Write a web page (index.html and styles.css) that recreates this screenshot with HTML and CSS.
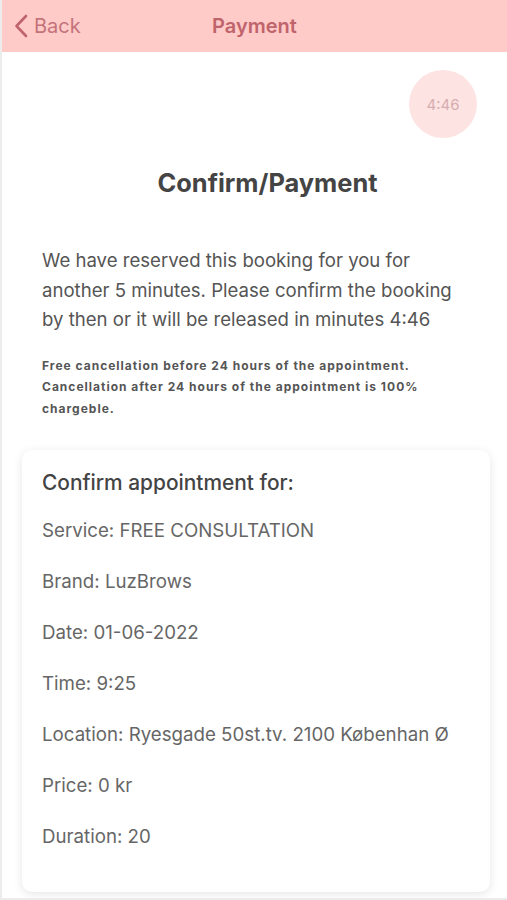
FILE: index.html
```html
<!DOCTYPE html>
<html lang="en">
<head>
    <meta charset="UTF-8">
    <meta name="viewport" content="width=device-width, initial-scale=1.0">
    <title>Payment</title>
    <link rel="stylesheet" href="styles.css">
</head>
<body>
    <div class="app">
        <header class="topbar">
            <a class="back" href="#">
                <svg width="14" height="24" viewBox="0 0 14 24" fill="none">
                    <path d="M12 2 L2.5 12 L12 22" stroke="#c0646c" stroke-width="2.6" stroke-linecap="round" stroke-linejoin="round"/>
                </svg>
                <span>Back</span>
            </a>
            <div class="topbar-title">Payment</div>
            <div></div>
        </header>

        <main class="content">
            <div class="timer-row">
                <div class="timer">4:46</div>
            </div>

            <h1>Confirm/Payment</h1>

            <p class="notice">We have reserved this booking for you for another 5 minutes. Please confirm the booking by then or it will be released in minutes 4:46</p>

            <p class="terms">Free cancellation before 24 hours of the appointment. Cancellation after 24 hours of the appointment is 100% chargeble.</p>

            <!-- Booking summary -->
            <div class="card">
                <h2>Confirm appointment for:</h2>
                <ul class="details">
                    <li>Service: FREE CONSULTATION</li>
                    <li>Brand: LuzBrows</li>
                    <li>Date: 01-06-2022</li>
                    <li>Time: 9:25</li>
                    <li>Location: Ryesgade 50st.tv. 2100 Københan Ø</li>
                    <li>Price: 0 kr</li>
                    <li>Duration: 20</li>
                </ul>
            </div>
        </main>
    </div>
</body>
</html>
```

FILE: styles.css
```css
body {
    font-family: Inter, "Noto Sans", sans-serif;
    background-color: #ececec;
    margin: 0;
    padding: 0;
}
.app {
    margin-left: 2px;
    height: 898px;
    background: #fff;
    overflow: hidden;
}
.topbar {
    height: 52px;
    background-color: #ffcbc9;
    display: grid;
    grid-template-columns: 1fr auto 1fr;
    align-items: center;
    padding: 0 12px;
}
.back {
    display: flex;
    align-items: center;
    gap: 6px;
    color: #c4737a;
    text-decoration: none;
    font-size: 20px;
}
.topbar-title {
    color: #c0646c;
    font-size: 20px;
    font-weight: 600;
}
.timer-row {
    display: flex;
    justify-content: flex-end;
    padding: 18px 30px 0 0;
}
.timer {
    width: 68px;
    height: 68px;
    border-radius: 50%;
    background: #fde3e2;
    color: #d6adb0;
    font-size: 15px;
    display: flex;
    align-items: center;
    justify-content: center;
}
h1 {
    text-align: center;
    color: #444;
    font-size: 25.4px;
    font-weight: 700;
    margin: 29px 0 0 26px;
}
.notice {
    margin: 48px 40px 0;
    color: #555;
    font-size: 18.6px;
    line-height: 29.5px;
}
.terms {
    margin: 20px 40px 0;
    color: #555;
    font-size: 12px;
    font-weight: 700;
    letter-spacing: 1px;
    line-height: 21.5px;
}
.card {
    margin: 31px 17px 0 20px;
    height: 442px;
    box-sizing: border-box;
    background: #fff;
    border-radius: 10px;
    box-shadow: 0 2px 10px rgba(0, 0, 0, 0.1);
    padding: 20px 20px;
}
.card h2 {
    margin: 0;
    color: #444;
    font-size: 20.9px;
    font-weight: 500;
    line-height: 26px;
}
.details {
    list-style: none;
    margin: 0;
    padding: 0;
}
.details li {
    color: #666;
    font-size: 18.7px;
    line-height: 26px;
    margin-top: 25px;
}
.details li:first-child {
    margin-top: 22px;
}
```
